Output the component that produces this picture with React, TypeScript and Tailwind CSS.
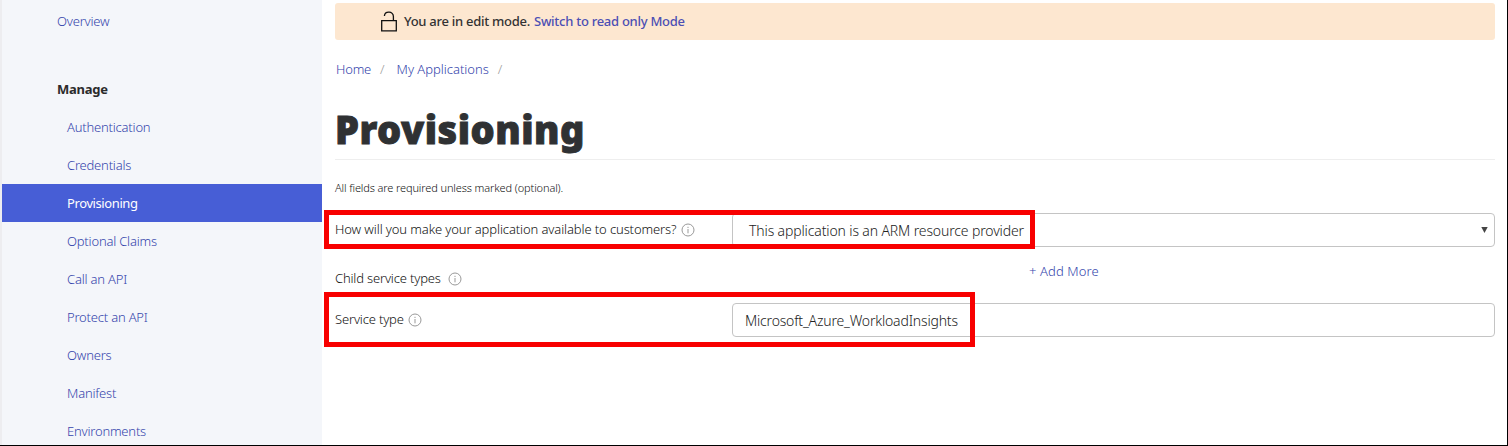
import { ReactNode } from "react";

const manageItems = [
  "Authentication",
  "Credentials",
  "Provisioning",
  "Optional Claims",
  "Call an API",
  "Protect an API",
  "Owners",
  "Manifest",
  "Environments",
];

function InfoIcon() {
  return (
    <svg className="size-[14px] shrink-0" viewBox="0 0 14 14" fill="none" stroke="#999">
      <circle cx="7" cy="7" r="6" />
      <path d="M7 6v4.3M7 3.8v1.2" />
    </svg>
  );
}

function UnlockIcon() {
  return (
    <svg className="h-[22px] w-4 shrink-0" viewBox="0 0 16 22" fill="none" stroke="#111" strokeWidth="1.3">
      <path d="M0.7 9.7h14.6v10.1H0.7zM12.4 9.7V5.4a4.3 4.3 0 0 0-4.3-4.3h-.4a4.3 4.3 0 0 0-4.3 3.9" />
    </svg>
  );
}

function Label({ children, className }: { children: ReactNode; className: string }) {
  return (
    <label className={"flex w-[397px] shrink-0 items-center text-[13px] text-[#111] " + className}>
      {children}
    </label>
  );
}

export default function App() {
  return (
    <div className="relative flex h-[446px] w-[1508px] overflow-hidden border-r border-b border-black bg-white font-['Noto_Sans','Open_Sans',sans-serif] font-light whitespace-nowrap text-[#111]">
      <nav className="w-[322px] shrink-0 border-l-2 border-[#ededf0] bg-[#f4f6fa] pt-[2px] text-[13px] tracking-[-0.2px] text-[#3445ac]">
        <a className="flex h-[38px] items-center pt-0.5 pl-[55px]">Overview</a>
        <h2 className="mt-[30px] flex h-[38px] items-center pt-0.5 pl-[55px] font-bold tracking-[-0.25px] text-[#2b2b2b]">Manage</h2>
        <ul>
          {manageItems.map((item) => (
            <li
              key={item}
              className={
                "flex h-[38px] items-center pt-0.5 pl-[65px] " +
                (item === "Provisioning" ? "bg-[#475ed6] font-normal tracking-[-0.4px] text-white" : "")
              }
            >
              {item}
            </li>
          ))}
        </ul>
      </nav>

      <main className="w-[1173px] shrink-0 pt-[3px] pl-[13px]">
        <div className="flex h-[37px] items-center rounded-[3px] bg-[#fde7d0] pl-[46px] text-[13px] font-medium tracking-[-0.27px]">
          <UnlockIcon />
          <span className="ml-[7px] text-[#333]">You are in edit mode.</span>
          <a className="ml-1 text-[#4c4fb4]">Switch to read only Mode</a>
        </div>

        <div className="mt-5 flex h-5 items-center text-[13px] tracking-[-0.02px] text-[#3445ac]">
          <a className="ml-px tracking-[-0.2px]">Home</a>
          <span className="ml-[9px] text-[#999]">/</span>
          <a className="ml-3">My Applications</a>
          <span className="ml-[9px] text-[#999]">/</span>
        </div>

        <h1 className="mt-5 flex h-[59px] items-center pb-px text-[38px] leading-none font-black tracking-[0.5px] text-[#2f3133] [-webkit-text-stroke:0.9px_#2f3133]">
          Provisioning
        </h1>
        <div className="border-t border-[#eee]" />
        <p className="mt-[18px] flex h-5 items-center text-[11px] tracking-[-0.12px]">
          All fields are required unless marked (optional).
        </p>

        <div className="mt-[15px] flex h-[34px]">
          <Label className="tracking-[-0.11px]">
            How will you make your application available to customers?
            <span className="ml-[5px]">
              <InfoIcon />
            </span>
          </Label>
          <div className="flex flex-1 items-center justify-between rounded-[4px] border border-[#c4c4c4] pr-[6px] pl-4 text-[14px] tracking-[-0.13px] text-[#222]">
            <span className="pt-px">This application is an ARM resource provider</span>
            <svg className="h-[6px] w-[7px]" viewBox="0 0 7 6" fill="#444">
              <path d="M0.3 0h6.4L3.5 6z" />
            </svg>
          </div>
        </div>

        <div className="mt-[14px] flex h-[36px]">
          <Label className="tracking-[-0.17px]">
            Child service types
            <span className="ml-[7px]">
              <InfoIcon />
            </span>
          </Label>
          <a className="ml-[297px] flex h-[22px] items-center text-[13px] tracking-[0.1px] text-[#3445ac]">+ Add More</a>
        </div>

        <div className="mt-[6px] flex h-[34px]">
          <Label className="tracking-[-0.17px]">
            Service type
            <span className="ml-1">
              <InfoIcon />
            </span>
          </Label>
          <div className="flex flex-1 items-center rounded-[4px] border border-[#c4c4c4] pt-px pl-3 text-[14px] tracking-[-0.18px] text-[#222]">
            Microsoft_Azure_WorkloadInsights
          </div>
        </div>
      </main>

      <div className="absolute top-[210px] left-[324px] h-[39px] w-[711px] border-[5px] border-[#f80000]" />
      <div className="absolute top-[292px] left-[324px] h-[55px] w-[651px] border-[5px] border-[#f80000]" />
    </div>
  );
}
